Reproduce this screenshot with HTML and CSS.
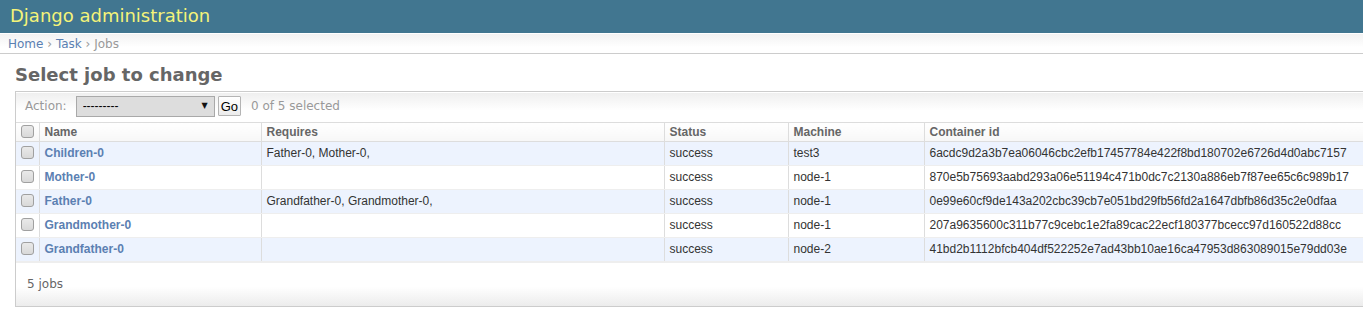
FILE: index.html
```html
<!DOCTYPE html>
<html lang="en">
<head>
<meta charset="utf-8">
<title>Select job to change | Django site admin</title>
<link rel="stylesheet" href="styles.css">
</head>
<body>
<div class="header">
  <h1 class="branding">Django administration</h1>
</div>
<div class="breadcrumbs">
  <a href="#">Home</a> › <a href="#">Task</a> › Jobs
</div>
<div class="content">
  <h1 class="title">Select job to change</h1>
  <div class="module">
    <div class="actions">
      <label class="action-label">Action:</label>
      <span class="select-wrap">
        <select class="action-select"><option>---------</option><option>Delete selected jobs</option></select>
        <span class="select-arrow">▼</span>
      </span>
      <button class="go-button" type="button">Go</button>
      <span class="action-counter">0 of 5 selected</span>
    </div>
    <table class="result-list">
      <colgroup>
        <col class="c-check"><col class="c-name"><col class="c-req"><col class="c-status"><col class="c-machine"><col class="c-cid">
      </colgroup>
      <thead>
        <tr>
          <th class="check-col"><input type="checkbox" class="cb"></th>
          <th>Name</th>
          <th>Requires</th>
          <th>Status</th>
          <th>Machine</th>
          <th>Container id</th>
        </tr>
      </thead>
      <tbody>
        <tr class="row1">
          <td class="check-col"><input type="checkbox" class="cb"></td>
          <th><a href="#">Children-0</a></th>
          <td>Father-0, Mother-0,</td>
          <td>success</td>
          <td>test3</td>
          <td>6acdc9d2a3b7ea06046cbc2efb17457784e422f8bd180702e6726d4d0abc7157</td>
        </tr>
        <tr class="row2">
          <td class="check-col"><input type="checkbox" class="cb"></td>
          <th><a href="#">Mother-0</a></th>
          <td></td>
          <td>success</td>
          <td>node-1</td>
          <td>870e5b75693aabd293a06e51194c471b0dc7c2130a886eb7f87ee65c6c989b17</td>
        </tr>
        <tr class="row1">
          <td class="check-col"><input type="checkbox" class="cb"></td>
          <th><a href="#">Father-0</a></th>
          <td>Grandfather-0, Grandmother-0,</td>
          <td>success</td>
          <td>node-1</td>
          <td>0e99e60cf9de143a202cbc39cb7e051bd29fb56fd2a1647dbfb86d35c2e0dfaa</td>
        </tr>
        <tr class="row2">
          <td class="check-col"><input type="checkbox" class="cb"></td>
          <th><a href="#">Grandmother-0</a></th>
          <td></td>
          <td>success</td>
          <td>node-1</td>
          <td>207a9635600c311b77c9cebc1e2fa89cac22ecf180377bcecc97d160522d88cc</td>
        </tr>
        <tr class="row1">
          <td class="check-col"><input type="checkbox" class="cb"></td>
          <th><a href="#">Grandfather-0</a></th>
          <td></td>
          <td>success</td>
          <td>node-2</td>
          <td>41bd2b1112bfcb404df522252e7ad43bb10ae16ca47953d863089015e79dd03e</td>
        </tr>
      </tbody>
    </table>
    <p class="paginator">5 jobs</p>
  </div>
</div>
</body>
</html>
```

FILE: styles.css
```css
html, body {
  overflow: hidden;
}
body {
  margin: 0;
  padding: 0;
  font-family: "DejaVu Sans", "Bitstream Vera Sans", Verdana, sans-serif;
  font-size: 12px;
  color: #333;
  background: #fff;
}
a {
  color: #5b80b2;
  text-decoration: none;
}
.header {
  background: #417690;
  height: 33px;
}
.branding {
  margin: 0;
  padding: 0 10px;
  font-size: 18px;
  font-weight: normal;
  line-height: 32px;
  color: #f4f379;
}
.breadcrumbs {
  background: linear-gradient(#f2f2f2, #ffffff 70%);
  padding: 3px 8px 2px 8px;
  line-height: 14px;
  font-size: 12px;
  color: #999;
  border-top: 1px solid #fff;
  border-bottom: 1px solid #ccc;
}
.content {
  margin: 10px 15px;
}
.title {
  font-size: 18px;
  color: #666;
  margin: 0 0 5px 0;
  line-height: 22px;
  padding: 0;
}
.module {
  border: 1px solid #ccc;
  background: #fff;
  width: 1366px;
}
.actions {
  display: flex;
  align-items: center;
  height: 26px;
  padding: 0 9px 3px 9px;
  border-top: 1px solid #fff;
  border-bottom: 1px solid #ddd;
  background: linear-gradient(#efefef, #ffffff 60%);
  color: #999;
}
.action-label {
  margin-right: 9px;
}
.select-wrap {
  position: relative;
  display: inline-block;
}
.action-select {
  display: block;
  appearance: none;
  -webkit-appearance: none;
  width: 139px;
  height: 21px;
  margin: 0;
  padding: 0 0 0 6px;
  border: 1px solid #a9a9a9;
  border-radius: 0;
  background: #dddddd;
  font-family: "Liberation Sans", Arial, sans-serif;
  font-size: 12px;
  color: #000;
}
.select-arrow {
  position: absolute;
  right: 7px;
  top: 5px;
  font-size: 8px;
  color: #111;
  pointer-events: none;
  font-family: "DejaVu Sans", sans-serif;
}
.go-button {
  margin-left: 3px;
  height: 20px;
  padding: 0 2px;
  border: 1px solid #b4b4b4;
  border-radius: 1px;
  background: linear-gradient(#ffffff, #ececec);
  font-family: "Liberation Sans", Arial, sans-serif;
  font-size: 13px;
  color: #000;
}
.action-counter {
  margin-left: 10px;
}
.result-list {
  border-collapse: collapse;
  table-layout: fixed;
  width: 1366px;
}
.c-check { width: 23px; }
.c-name { width: 222px; }
.c-req { width: 403px; }
.c-status { width: 124px; }
.c-machine { width: 136px; }
.c-cid { width: 458px; }
.result-list th,
.result-list td {
  font-family: "Liberation Sans", Arial, sans-serif;
  font-size: 12px;
  line-height: 13px;
  text-align: left;
  vertical-align: top;
  padding: 5px;
  border-left: 1px solid #ddd;
  border-bottom: 1px solid #eee;
  white-space: nowrap;
  overflow: hidden;
}
.result-list thead th {
  color: #666;
  font-weight: bold;
  padding: 3px 5px 2px 5px;
  line-height: 13px;
  background: linear-gradient(#ffffff, #f7f7f7);
  border-bottom: 1px solid #ddd;
}
.result-list tbody th {
  font-weight: bold;
}
.result-list .check-col {
  border-left: none;
  padding: 2px 0 0 4px;
}
.result-list tbody .check-col {
  padding-top: 4px;
}
.row1 { background: #edf3fe; }
.row2 { background: #fff; }
.cb {
  appearance: none;
  -webkit-appearance: none;
  display: block;
  width: 13px;
  height: 13px;
  margin: 0 0 0 1px;
  border: 1px solid #a0a0a0;
  border-radius: 3px;
  background: linear-gradient(#e9e9e9, #d9d9d9);
  box-sizing: border-box;
}
.paginator {
  margin: 0;
  padding: 10px 11px 11px 11px;
  line-height: 22px;
  color: #666;
  background: linear-gradient(#ffffff 55%, #ececec);
  border-top: 1px solid #eee;
}
```
